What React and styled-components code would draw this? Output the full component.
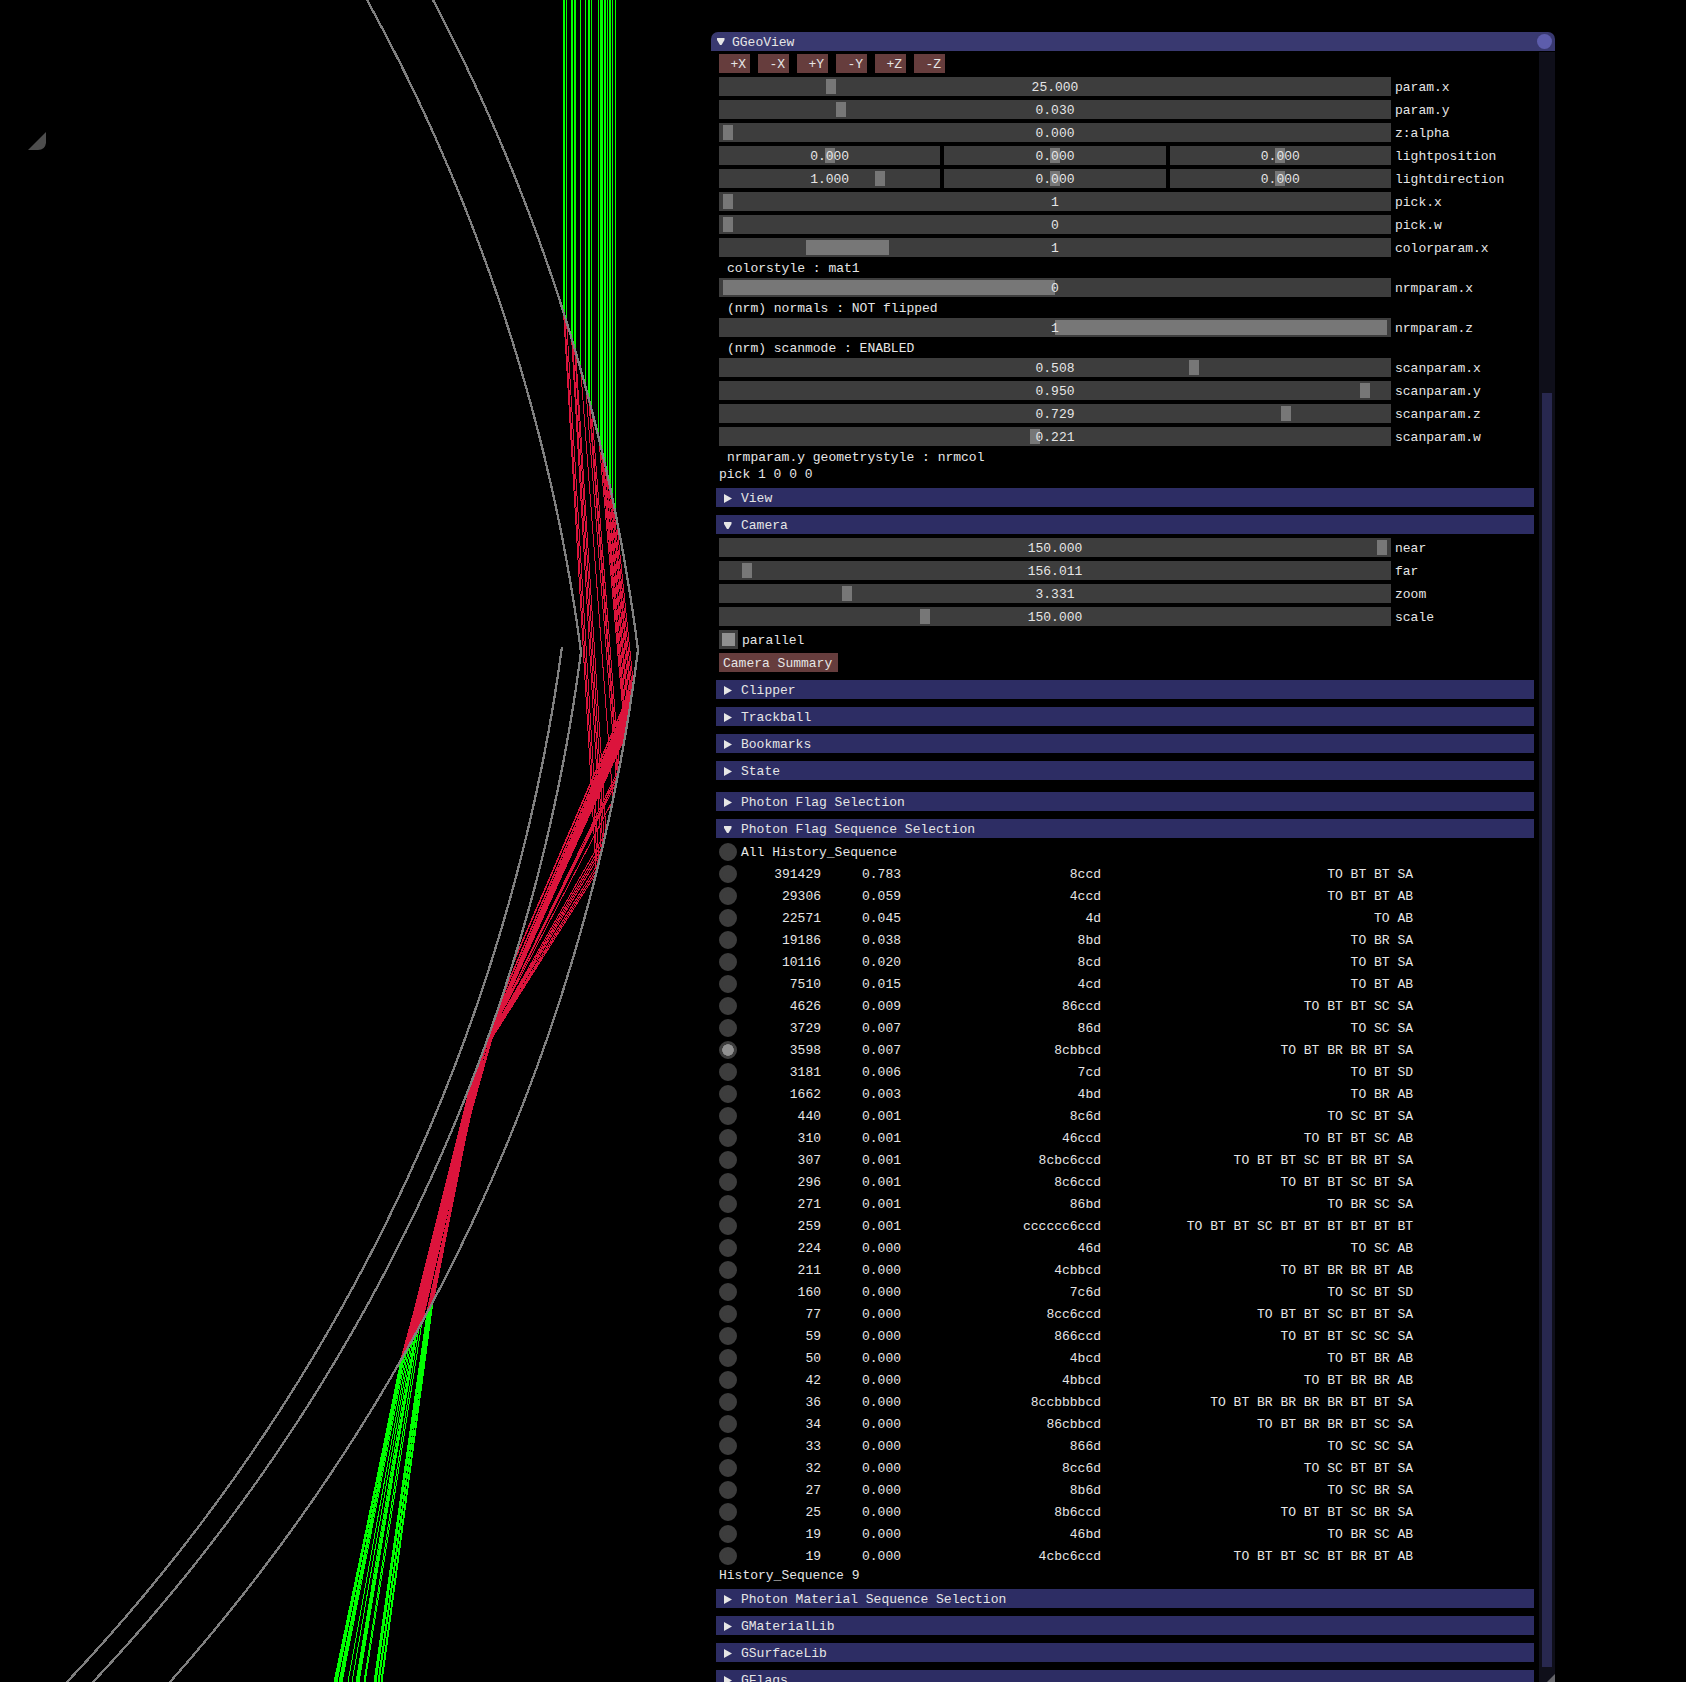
import React, { useState } from "react";
import styled, { createGlobalStyle, css } from "styled-components";

const GlobalStyle = createGlobalStyle`
  *, *::before, *::after { box-sizing: border-box; }
  html, body { margin: 0; background: #000; }
  body, button, input { font-family: "Liberation Mono", "DejaVu Sans Mono", monospace; font-size: 13px; }
`;

const color = {
  text: "#e6e6e6",
  title: "#393970",
  header: "#2d2d64",
  frame: "#3d3d3d",
  grab: "#777777",
  check: "#909090",
  button: "#663d3d",
  close: "#5d5dac",
  track: "#0f0f1a",
  thumb: "#28284f",
};

/* ---------- layout ---------- */

const Screen = styled.main`
  position: relative;
  display: grid;
  grid-template-columns: minmax(0, 711fr) minmax(0, 844fr) minmax(0, 131fr);
  height: 100vh;
  padding-top: 32px;
  overflow: hidden;
  background: #000;
  color: ${color.text};
`;

const Scene = styled.svg`
  position: absolute;
  inset: 0;
  width: 100%;
  height: 100%;
`;

const Window = styled.section`
  position: relative;
  grid-column: 2;
  display: flex;
  flex-direction: column;
  min-height: 0;
`;

const TitleBar = styled.header`
  display: flex;
  align-items: center;
  flex: none;
  gap: 7px;
  height: 19px;
  padding: 0 3px 0 6px;
  border-radius: 7px 7px 0 0;
  background: ${color.title};
`;

const Title = styled.h1`
  flex: 1;
  margin: 0;
  padding-top: 2px;
  font-size: 13px;
  font-weight: 400;
  line-height: 19px;
`;

const CloseButton = styled.button`
  width: 15px;
  height: 15px;
  padding: 0;
  border: 0;
  border-radius: 50%;
  background: ${color.close};
`;

const Body = styled.div`
  display: flex;
  flex: 1;
  min-height: 0;
  padding-top: 1px;
  background: #000;
`;

const Content = styled.div`
  display: flex;
  flex: 1;
  flex-direction: column;
  gap: 4px;
  min-width: 0;
  padding: 2px 0 0 8px;
  overflow: hidden;

  & > * { flex: none; }
`;

const ScrollTrack = styled.div`
  display: grid;
  grid-template-rows: 341fr 1274fr 15fr;
  width: 16px;
  padding: 0 3px;
  background: ${color.track};
`;

const ScrollThumb = styled.div`
  grid-row: 2;
  background: ${color.thumb};
`;

const ResizeGrip = styled.div`
  position: absolute;
  right: 0;
  bottom: 0;
  width: 8px;
  height: 8px;
  background: #66666b;
  clip-path: polygon(100% 0, 100% 100%, 0 100%);
`;

/* ---------- widgets ---------- */

const ButtonRow = styled.div`
  display: flex;
  gap: 8px;
`;

const Button = styled.button`
  width: ${(p) => (p.$wide ? "119px" : "31px")};
  height: 19px;
  padding: 0 4px;
  border: 0;
  background: ${color.button};
  color: ${color.text};
  line-height: 21px;
  text-align: ${(p) => (p.$wide ? "left" : "right")};
  white-space: nowrap;
`;

const Field = styled.div`
  display: grid;
  grid-template-columns: minmax(0, 1fr) 136px;
  gap: 4px;
  height: 19px;
  margin-right: 8px;
`;

const FieldLabel = styled.label`
  line-height: 21px;
  white-space: nowrap;
`;

const Frames = styled.div`
  display: grid;
  grid-auto-flow: column;
  grid-auto-columns: minmax(0, 1fr);
  gap: 4px;
`;

const Frame = styled.div`
  position: relative;
  height: 19px;
  background: ${color.frame};
`;

const thumb = css`
  width: ${(p) => p.$grab};
  height: 15px;
  border: 0;
  border-radius: 0;
  background: ${color.grab};
`;

const Range = styled.input`
  display: block;
  width: 100%;
  height: 19px;
  margin: 0;
  padding: 2px 4px;
  appearance: none;
  background: transparent;

  &::-webkit-slider-thumb { appearance: none; ${thumb} }
  &::-moz-range-thumb { ${thumb} }
`;

const Value = styled.output`
  position: absolute;
  inset: 0;
  line-height: 21px;
  text-align: center;
  pointer-events: none;
`;

const Line = styled.p`
  height: 13px;
  margin: 0;
  padding-left: ${(p) => (p.$indent ? "8px" : "0")};
  line-height: 15px;
  white-space: nowrap;
`;

const CheckRow = styled.label`
  display: flex;
  gap: 4px;
  height: 19px;
  line-height: 21px;
`;

const Checkbox = styled.input`
  width: 19px;
  height: 19px;
  margin: 0;
  border: 3px solid ${color.frame};
  appearance: none;
  background: ${color.frame};

  &:checked { background: ${color.check}; }
`;

const Header = styled.button`
  display: flex;
  align-items: center;
  gap: 9px;
  height: 19px;
  margin: ${(p) => (p.$spaced ? "8px" : "4px")} 5px 0 -3px;
  padding: 2px 8px 0;
  border: 0;
  background: ${color.header};
  color: ${color.text};
  line-height: 19px;
  text-align: left;
`;

const ArrowIcon = styled.svg`
  flex: none;
  width: 8px;
  height: 10px;
  fill: ${color.text};
`;

const Table = styled.table`
  width: 694px;
  margin-bottom: -4px;
  border-collapse: collapse;
  table-layout: fixed;
`;

const Row = styled.tr`
  height: 22px;
`;

const Cell = styled.td`
  height: 22px;
  padding: 0 0 1px;
  line-height: 21px;
  text-align: ${(p) => (p.$left ? "left" : "right")};
  vertical-align: top;
  white-space: nowrap;
`;

const Radio = styled.input`
  display: block;
  width: 18px;
  height: 18px;
  margin: 1px 0 0;
  border: 3px solid ${color.frame};
  border-radius: 50%;
  appearance: none;
  background: ${color.frame};

  &:checked { background: radial-gradient(circle, ${color.check} 6px, ${color.frame} 6px); }
`;

/* ---------- data ---------- */

const directions = ["+X", "-X", "+Y", "-Y", "+Z", "-Z"];

const one = (label, text, at, grab) => ({ label, frames: [{ text, at, grab }] });

const cameraFields = [
  one("near", "150.000", 1),
  one("far", "156.011", 0.029),
  one("zoom", "3.331", 0.182),
  one("scale", "150.000", 0.301),
];

const paramFields = [
  one("param.x", "25.000", 0.158),
  one("param.y", "0.030", 0.173),
  one("z:alpha", "0.000", 0),
  {
    label: "lightposition",
    frames: [{ text: "0.000", at: 0.5 }, { text: "0.000", at: 0.5 }, { text: "0.000", at: 0.5 }],
  },
  {
    label: "lightdirection",
    frames: [{ text: "1.000", at: 0.75 }, { text: "0.000", at: 0.5 }, { text: "0.000", at: 0.5 }],
  },
  one("pick.x", "1", 0),
  one("pick.w", "0", 0),
  one("colorparam.x", "1", 0.143, "12.5%"),
];

const scanFields = [
  one("scanparam.x", "0.508", 0.713),
  one("scanparam.y", "0.950", 0.974),
  one("scanparam.z", "0.729", 0.853),
  one("scanparam.w", "0.221", 0.469),
];

const sequences = [
  ["391429", "0.783", "8ccd", "TO BT BT SA"],
  ["29306", "0.059", "4ccd", "TO BT BT AB"],
  ["22571", "0.045", "4d", "TO AB"],
  ["19186", "0.038", "8bd", "TO BR SA"],
  ["10116", "0.020", "8cd", "TO BT SA"],
  ["7510", "0.015", "4cd", "TO BT AB"],
  ["4626", "0.009", "86ccd", "TO BT BT SC SA"],
  ["3729", "0.007", "86d", "TO SC SA"],
  ["3598", "0.007", "8cbbcd", "TO BT BR BR BT SA"],
  ["3181", "0.006", "7cd", "TO BT SD"],
  ["1662", "0.003", "4bd", "TO BR AB"],
  ["440", "0.001", "8c6d", "TO SC BT SA"],
  ["310", "0.001", "46ccd", "TO BT BT SC AB"],
  ["307", "0.001", "8cbc6ccd", "TO BT BT SC BT BR BT SA"],
  ["296", "0.001", "8c6ccd", "TO BT BT SC BT SA"],
  ["271", "0.001", "86bd", "TO BR SC SA"],
  ["259", "0.001", "cccccc6ccd", "TO BT BT SC BT BT BT BT BT BT"],
  ["224", "0.000", "46d", "TO SC AB"],
  ["211", "0.000", "4cbbcd", "TO BT BR BR BT AB"],
  ["160", "0.000", "7c6d", "TO SC BT SD"],
  ["77", "0.000", "8cc6ccd", "TO BT BT SC BT BT SA"],
  ["59", "0.000", "866ccd", "TO BT BT SC SC SA"],
  ["50", "0.000", "4bcd", "TO BT BR AB"],
  ["42", "0.000", "4bbcd", "TO BT BR BR AB"],
  ["36", "0.000", "8ccbbbbcd", "TO BT BR BR BR BR BT BT SA"],
  ["34", "0.000", "86cbbcd", "TO BT BR BR BT SC SA"],
  ["33", "0.000", "866d", "TO SC SC SA"],
  ["32", "0.000", "8cc6d", "TO SC BT BT SA"],
  ["27", "0.000", "8b6d", "TO SC BR SA"],
  ["25", "0.000", "8b6ccd", "TO BT BT SC BR SA"],
  ["19", "0.000", "46bd", "TO BR SC AB"],
  ["19", "0.000", "4cbc6ccd", "TO BT BT SC BT BR BT AB"],
];

/* ---------- photon scene ---------- */

/* Samples a circular arc from a down to b that bulges to the right. */
const arc = (a, b, radius, steps = 40) => {
  const dx = b[0] - a[0];
  const dy = b[1] - a[1];
  const chord = Math.hypot(dx, dy);
  const depth = Math.sqrt(radius * radius - (chord * chord) / 4);
  const cx = (a[0] + b[0]) / 2 - (dy / chord) * depth;
  const cy = (a[1] + b[1]) / 2 + (dx / chord) * depth;
  const start = Math.atan2(a[1] - cy, a[0] - cx);
  const end = Math.atan2(b[1] - cy, b[0] - cx);
  return Array.from({ length: steps + 1 }, (_, i) => {
    const angle = start + ((end - start) * i) / steps;
    return [cx + radius * Math.cos(angle), cy + radius * Math.sin(angle)];
  });
};

const outerTop = arc([433, 0], [638, 650], 1916);
const outerBottom = arc([638, 650], [170, 1682], 1916);
const innerTop = arc([367, 0], [581, 652], 1862);
const innerBottom = arc([581, 652], [93, 1682], 1850);
const third = arc([562, 647], [67, 1682], 1873);

/* Linear interpolation along a curve: `from` is the known axis, `to` the wanted one. */
const along = (curve, value, from, to) => {
  for (let i = 1; i < curve.length; i += 1) {
    const a = curve[i - 1];
    const b = curve[i];
    if ((value - a[from]) * (value - b[from]) <= 0 && a[from] !== b[from]) {
      return a[to] + ((value - a[from]) / (b[from] - a[from])) * (b[to] - a[to]);
    }
  }
  return 0;
};

/* entry x, wall y, inner y, exit x, x at the lower edge */
const rays = [
  [563, 873, 1054, 433, 382], [564, 868, 1052, 432, 381], [566, 862, 1050, 431, 379],
  [571, 852, 1049, 430, 378], [572, 846, 1046, 429, 376], [574, 840, 1044, 428, 375],
  [575, 832, 1042, 427, 374], [580, 800, 1042, 422, 365], [585, 782, 1044, 419, 364],
  [588, 777, 1045, 417, 359], [589, 774, 1046, 416, 358], [591, 768, 1048, 415, 357],
  [598, 736, 1036, 413, 356], [600, 732, 1048, 411, 352], [601, 728, 1056, 409, 348],
  [602, 722, 1062, 407, 342], [604, 716, 1068, 405, 341], [605, 712, 1074, 404, 340],
  [607, 706, 1080, 403, 339], [609, 700, 1062, 402, 337], [610, 696, 1030, 401, 336],
  [612, 690, 1000, 401, 335], [615, 684, 965, 402, 334],
];

const toPoints = (points) => points.map((p) => p.join(",")).join(" ");

function PhotonScene() {
  return (
    <Scene viewBox="0 0 1686 1682" preserveAspectRatio="xMinYMin slice" aria-hidden="true">
      <path d="M46 132V143Q45 150 38 150H28Z" fill="#4d4d4d" />
      <g fill="none" shapeRendering="crispEdges">
        {rays.map(([x, wallY, innerY, exitX, endX]) => {
          const entry = [x + 0.5, along(outerTop, x, 0, 1)];
          const wall = [along(outerBottom, wallY, 1, 0), wallY];
          const bounce = [along(innerBottom, innerY, 1, 0), innerY];
          const exit = [exitX, along(outerBottom, exitX, 0, 1)];
          return (
            <g key={x}>
              <polyline stroke="#00ff00" points={toPoints([[x + 0.5, 0], entry])} />
              <polyline stroke="#dc143c" points={toPoints([entry, wall])} />
              <polyline stroke="#dc143c" strokeWidth={x > 597 ? 1.6 : 1} points={toPoints([wall, bounce])} />
              <polyline stroke="#dc143c" strokeWidth="1.6" points={toPoints([bounce, exit])} />
              <polyline stroke="#00ff00" points={toPoints([exit, [endX, 1682]])} />
            </g>
          );
        })}
        <g stroke="#7f7f7f" strokeWidth="2.3">
          <polyline points={toPoints([...outerTop, ...outerBottom])} />
          <polyline points={toPoints([...innerTop, ...innerBottom])} />
          <polyline points={toPoints(third)} />
        </g>
      </g>
    </Scene>
  );
}

/* ---------- components ---------- */

function Arrow({ open }) {
  return (
    <ArrowIcon viewBox="0 0 8 10" aria-hidden="true">
      <path d={open ? "M0 1H7.5V3L4.5 8H3L0 3Z" : "M0 0L8 4.5L0 9Z"} />
    </ArrowIcon>
  );
}

function Section({ title, open, spaced }) {
  return (
    <Header type="button" aria-expanded={Boolean(open)} $spaced={spaced}>
      <Arrow open={open} />
      {title}
    </Header>
  );
}

function SliderFrame({ id, name, text, at, grab = "10px" }) {
  return (
    <Frame>
      <Range id={id} aria-label={name} type="range" min="0" max="1" step="0.001" defaultValue={at} $grab={grab} />
      <Value htmlFor={id}>{text}</Value>
    </Frame>
  );
}

function SliderField({ label, frames }) {
  return (
    <Field>
      <Frames>
        {frames.map((frame, i) => (
          <SliderFrame
            key={i}
            id={`${label}-${i}`}
            name={frames.length > 1 ? `${label} ${"xyz"[i]}` : undefined}
            {...frame}
          />
        ))}
      </Frames>
      <FieldLabel htmlFor={`${label}-0`}>{label}</FieldLabel>
    </Field>
  );
}

const fieldList = (fields) => fields.map((field) => <SliderField key={field.label} {...field} />);

function SequenceTable() {
  const [selected, setSelected] = useState(9);
  const radio = (index) => (
    <Radio
      type="radio"
      name="history"
      id={`history-${index}`}
      checked={selected === index}
      onChange={() => setSelected(index)}
    />
  );
  return (
    <>
      <Table>
        <colgroup>
          <col width="22" />
          <col width="80" />
          <col width="80" />
          <col width="200" />
          <col width="312" />
        </colgroup>
        <tbody>
          <Row>
            <Cell>{radio(0)}</Cell>
            <Cell $left colSpan={4}>
              <label htmlFor="history-0">All History_Sequence</label>
            </Cell>
          </Row>
          {sequences.map(([count, fraction, code, flags], i) => (
            <Row key={flags}>
              <Cell>{radio(i + 1)}</Cell>
              <Cell>
                <label htmlFor={`history-${i + 1}`}>{count}</label>
              </Cell>
              <Cell>{fraction}</Cell>
              <Cell>{code}</Cell>
              <Cell>{flags}</Cell>
            </Row>
          ))}
        </tbody>
      </Table>
      <Line>History_Sequence {selected}</Line>
    </>
  );
}

export default function App() {
  return (
    <Screen>
      <GlobalStyle />
      <PhotonScene />
      <Window>
        <TitleBar>
          <Arrow open />
          <Title>GGeoView</Title>
          <CloseButton type="button" aria-label="Close" />
        </TitleBar>
        <Body>
          <Content>
            <ButtonRow>
              {directions.map((direction) => (
                <Button key={direction} type="button">{direction}</Button>
              ))}
            </ButtonRow>
            {fieldList(paramFields)}
            <Line $indent>colorstyle : mat1</Line>
            <SliderField {...one("nrmparam.x", "0", 0, "50%")} />
            <Line $indent>(nrm) normals : NOT flipped</Line>
            <SliderField {...one("nrmparam.z", "1", 1, "50%")} />
            <Line $indent>(nrm) scanmode : ENABLED</Line>
            {fieldList(scanFields)}
            <Line $indent>nrmparam.y geometrystyle : nrmcol</Line>
            <Line>pick 1 0 0 0</Line>
            <Section title="View" />
            <Section title="Camera" open />
            {fieldList(cameraFields)}
            <CheckRow>
              <Checkbox type="checkbox" defaultChecked />
              parallel
            </CheckRow>
            <Button type="button" $wide>Camera Summary</Button>
            <Section title="Clipper" />
            <Section title="Trackball" />
            <Section title="Bookmarks" />
            <Section title="State" />
            <Section title="Photon Flag Selection" spaced />
            <Section title="Photon Flag Sequence Selection" open />
            <SequenceTable />
            <Section title="Photon Material Sequence Selection" />
            <Section title="GMaterialLib" />
            <Section title="GSurfaceLib" />
            <Section title="GFlags" />
          </Content>
          <ScrollTrack>
            <ScrollThumb />
          </ScrollTrack>
        </Body>
        <ResizeGrip />
      </Window>
    </Screen>
  );
}
